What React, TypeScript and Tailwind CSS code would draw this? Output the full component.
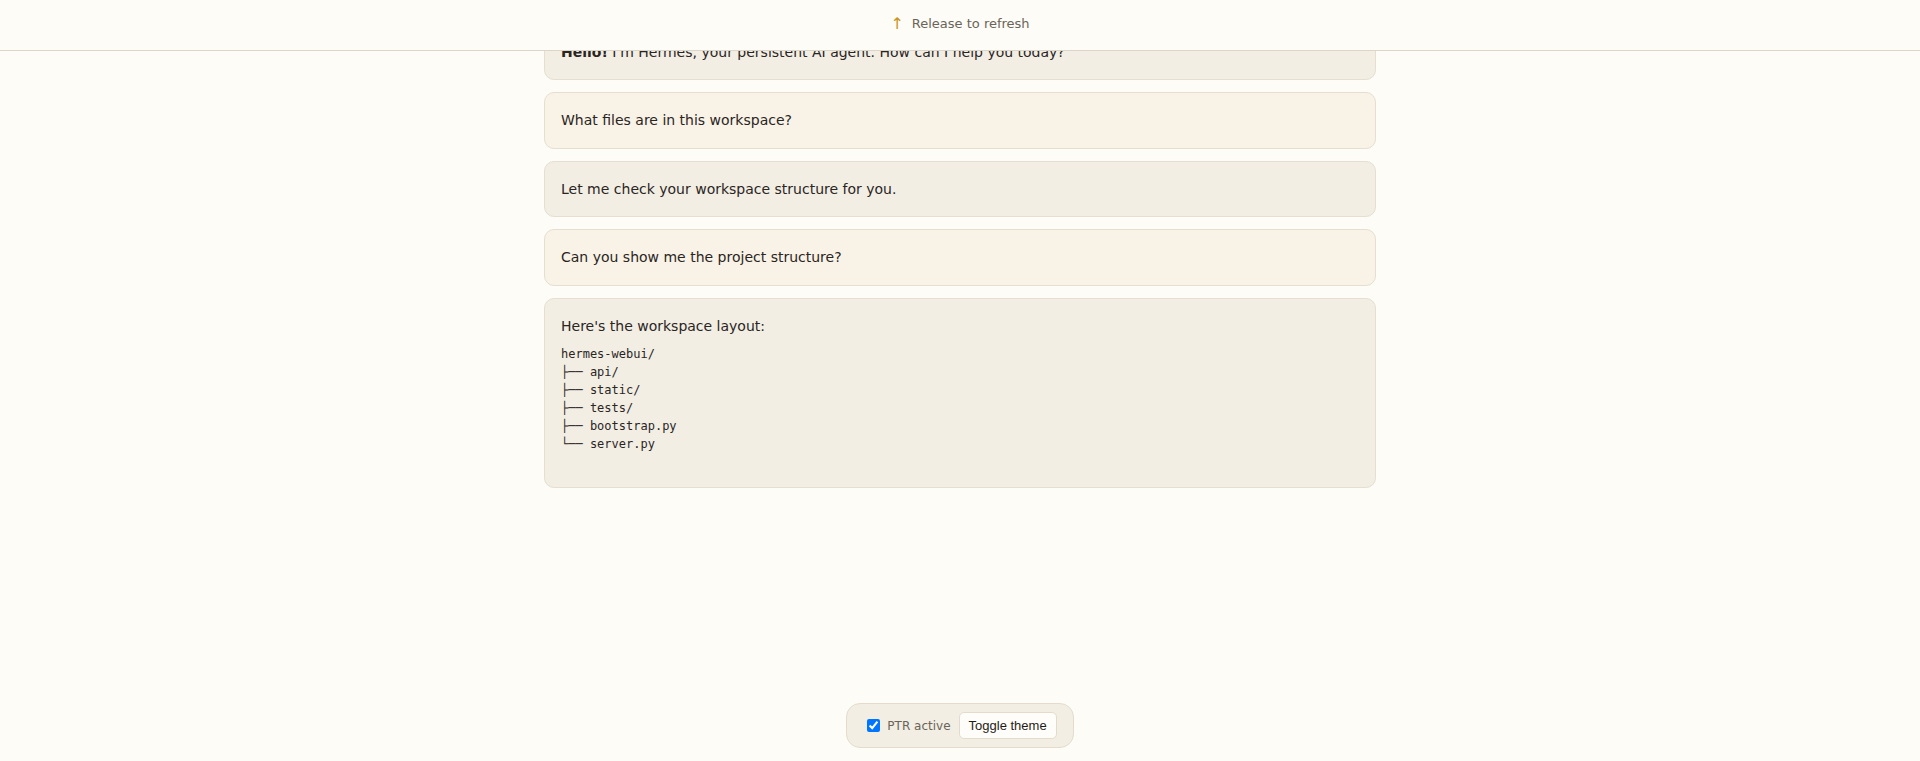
import React, { useState } from 'react';

interface Message {
  id: number;
  role: 'user' | 'assistant';
  text: React.ReactNode;
  code?: string;
}

const TREE = `hermes-webui/
├── api/
├── static/
├── tests/
├── bootstrap.py
└── server.py`;

const messages: Message[] = [
  {
    id: 1,
    role: 'assistant',
    text: (
      <>
        <strong className="font-bold">Hello!</strong> I'm Hermes, your persistent AI agent. How can I help you today?
      </>
    ),
  },
  { id: 2, role: 'user', text: 'What files are in this workspace?' },
  { id: 3, role: 'assistant', text: 'Let me check your workspace structure for you.' },
  { id: 4, role: 'user', text: 'Can you show me the project structure?' },
  { id: 5, role: 'assistant', text: "Here's the workspace layout:", code: TREE },
];

function MessageCard({ msg }: { msg: Message }) {
  const bg = msg.role === 'user' ? 'bg-[#f9f2e6]' : 'bg-[#f2eee4]';
  return (
    <div className={`${bg} mb-3 rounded-[10px] border border-[#e6dfd1] px-4 py-4 text-[14px] leading-[1.6] text-[#2a251f]`}>
      <p>{msg.text}</p>
      {msg.code && (
        <pre className="mt-[8px] pb-[18px] font-['DejaVu_Sans_Mono',monospace] text-[12px] leading-[18px] text-[#2a251f]">
          {msg.code}
        </pre>
      )}
    </div>
  );
}

export default function App() {
  const [ptr, setPtr] = useState(true);

  return (
    <div className="min-h-[761px] bg-[#fdfcf7] font-['DejaVu_Sans',sans-serif]">
      {/* pull-to-refresh indicator */}
      <div className="fixed inset-x-0 top-0 z-10 h-[51px] border-b border-[#dcd6ca] bg-[#fdfcf7]">
        <div className="flex items-center justify-center gap-[8px] pt-[14px] text-[13px] text-[#6b6459]">
          <span className="text-[16px] leading-none text-[#c9961c]">↑</span>
          <span>Release to refresh</span>
        </div>
      </div>

      <main className="mx-auto w-[832px] pt-[24px]">
        {messages.map((m) => (
          <MessageCard key={m.id} msg={m} />
        ))}
      </main>

      <div className="fixed inset-x-0 bottom-[13px] flex justify-center">
        <div className="flex items-center gap-[8px] rounded-[14px] border border-[#e3dccd] bg-[#f2eee4] px-4 py-2">
          <label className="flex items-center gap-[4px] text-[12px] text-[#6b6459]">
            <input
              type="checkbox"
              checked={ptr}
              onChange={(e) => setPtr(e.target.checked)}
              className="m-[3px] ml-[4px] h-[13px] w-[13px]"
            />
            PTR active
          </label>
          <button className="h-[27px] rounded-[5px] border border-[#e3dccd] bg-[#fffdf9] px-[9px] font-['Liberation_Sans',Arial,sans-serif] text-[13px] text-[#1f1c18]">
            Toggle theme
          </button>
        </div>
      </div>
    </div>
  );
}
